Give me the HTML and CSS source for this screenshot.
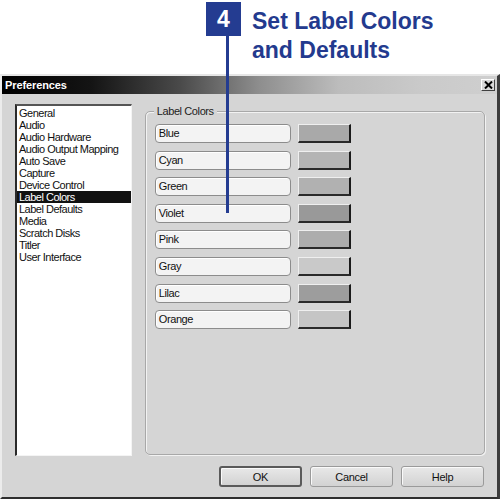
FILE: index.html
```html
<!DOCTYPE html>
<html>
<head>
<meta charset="utf-8">
<link rel="stylesheet" href="styles.css">
</head>
<body>
<div class="page">
  <div class="header">
    <div class="step">4</div>
    <div class="heading">Set Label Colors<br>and Defaults</div>
  </div>
  <div class="callout-line"></div>
  <div class="dialog">
    <div class="titlebar">
      <span class="title">Preferences</span>
      <span class="close">
        <svg width="9" height="8" viewBox="0 0 9 8"><path d="M1 0.5 L8 7.5 M8 0.5 L1 7.5" stroke="#000" stroke-width="2"/></svg>
      </span>
    </div>
    <div class="body">
      <div class="content">
        <ul class="list">
          <li>General</li>
          <li>Audio</li>
          <li>Audio Hardware</li>
          <li>Audio Output Mapping</li>
          <li>Auto Save</li>
          <li>Capture</li>
          <li>Device Control</li>
          <li class="selected">Label Colors</li>
          <li>Label Defaults</li>
          <li>Media</li>
          <li>Scratch Disks</li>
          <li>Titler</li>
          <li>User Interface</li>
        </ul>
        <div class="group">
          <span class="legend">Label Colors</span>
          <div class="rows">
            <div class="row"><div class="field">Blue</div><div class="swatch" style="background:#a9a9a9"></div></div>
            <div class="row"><div class="field">Cyan</div><div class="swatch" style="background:#b4b4b4"></div></div>
            <div class="row"><div class="field">Green</div><div class="swatch" style="background:#b1b1b1"></div></div>
            <div class="row"><div class="field">Violet</div><div class="swatch" style="background:#999999"></div></div>
            <div class="row"><div class="field">Pink</div><div class="swatch" style="background:#adadad"></div></div>
            <div class="row"><div class="field">Gray</div><div class="swatch" style="background:#c9c9c9"></div></div>
            <div class="row"><div class="field">Lilac</div><div class="swatch" style="background:#9d9d9d"></div></div>
            <div class="row"><div class="field">Orange</div><div class="swatch" style="background:#c5c5c5"></div></div>
          </div>
        </div>
      </div>
      <div class="buttons">
        <button class="btn default">OK</button>
        <button class="btn">Cancel</button>
        <button class="btn">Help</button>
      </div>
    </div>
  </div>
</div>
</body>
</html>
```

FILE: styles.css
```css
html, body {
  margin: 0;
  padding: 0;
  background: #ffffff;
}
.page {
  position: relative;
  width: 500px;
  height: 501px;
  overflow: hidden;
  font-family: "Liberation Sans", Arial, sans-serif;
}
.header {
  display: flex;
  align-items: flex-start;
  height: 74px;
  padding-left: 206px;
  box-sizing: border-box;
}
.step {
  margin-top: 2px;
  width: 35px;
  height: 34px;
  background: #243c91;
  color: #ffffff;
  font-weight: bold;
  font-size: 23px;
  line-height: 34px;
  text-align: center;
}
.heading {
  margin-left: 11px;
  margin-top: 7px;
  color: #233a8e;
  font-weight: bold;
  font-size: 23px;
  line-height: 29px;
}
.callout-line {
  position: absolute;
  left: 226px;
  top: 36px;
  width: 3px;
  height: 177px;
  background: #243c91;
  z-index: 5;
}
.dialog {
  width: 500px;
  height: 425px;
  box-sizing: border-box;
  background: #d5d5d5;
  border-top: 2px solid #e6e6e6;
  border-left: 2px solid #ececec;
  border-right: 3px solid #3c3c3c;
  border-bottom: 2px solid #2e2e2e;
  display: flex;
  flex-direction: column;
}
.titlebar {
  height: 18px;
  display: flex;
  align-items: center;
  justify-content: space-between;
  padding: 0 2px 0 3px;
  background: linear-gradient(to right, #000 0%, #141414 18%, #4a4a4a 36%, #8e8e8e 52%, #bcbcbc 68%, #cacaca 85%, #cfcfcf 100%);
}
.title {
  color: #ffffff;
  font-weight: bold;
  font-size: 11px;
  letter-spacing: -0.1px;
}
.close {
  width: 14px;
  height: 12px;
  box-sizing: border-box;
  background: #d8d8d8;
  border-top: 1px solid #ffffff;
  border-left: 1px solid #ffffff;
  border-right: 1px solid #404040;
  border-bottom: 1px solid #404040;
  display: flex;
  align-items: center;
  justify-content: center;
}
.body {
  flex: 1;
  display: flex;
  flex-direction: column;
  padding: 10px 12px 0 13px;
}
.content {
  display: flex;
  align-items: flex-start;
}
.list {
  list-style: none;
  margin: 0;
  padding: 1px 0 0 0;
  width: 117px;
  height: 352px;
  box-sizing: border-box;
  background: #ffffff;
  border-top: 2px solid #555;
  border-left: 2px solid #2a2a2a;
  border-right: 1px solid #f4f4f4;
  border-bottom: 1px solid #f4f4f4;
  font-size: 11px;
  letter-spacing: -0.5px;
  color: #111;
}
.list li {
  height: 12px;
  line-height: 12px;
  padding-left: 2px;
  white-space: nowrap;
}
.list li.selected {
  background: #111111;
  color: #ffffff;
}
.group {
  position: relative;
  margin-left: 13px;
  margin-top: 7px;
  width: 341px;
  height: 344px;
  box-sizing: border-box;
  border: 1px solid #a8a8a8;
  border-radius: 5px;
  box-shadow: inset 1px 1px 0 #f2f2f2, 1px 1px 0 #f2f2f2;
  padding: 12px 0 0 9px;
}
.legend {
  position: absolute;
  left: 8px;
  top: -7px;
  padding: 0 3px;
  background: #d5d5d5;
  font-size: 11px;
  letter-spacing: -0.4px;
  color: #222;
  line-height: 12px;
}
.rows {
  display: flex;
  flex-direction: column;
  gap: 7.6px;
}
.row {
  display: flex;
  align-items: center;
  gap: 7px;
  height: 19px;
}
.field {
  width: 136px;
  height: 19px;
  box-sizing: border-box;
  border: 1px solid #8c8c8c;
  border-radius: 4px;
  background: #f3f3f3;
  box-shadow: inset 1px 1px 0 #ffffff;
  font-size: 11px;
  letter-spacing: -0.4px;
  line-height: 17px;
  padding-left: 3px;
  color: #111;
}
.swatch {
  width: 53px;
  height: 19px;
  box-sizing: border-box;
  border-top: 1px solid #efefef;
  border-left: 1px solid #efefef;
  border-right: 2px solid #1a1a1a;
  border-bottom: 2px solid #2a2a2a;
}
.buttons {
  display: flex;
  justify-content: flex-end;
  gap: 8px;
  margin-top: 10px;
  padding-right: 1px;
}
.btn {
  width: 83px;
  height: 21px;
  box-sizing: border-box;
  border: 1px solid #9a9a9a;
  border-radius: 3px;
  background: linear-gradient(#e8e8e8, #d2d2d2);
  box-shadow: inset 1px 1px 0 #fafafa;
  font-family: "Liberation Sans", Arial, sans-serif;
  font-size: 11px;
  letter-spacing: -0.3px;
  color: #111;
  padding: 0;
}
.btn.default {
  border: 2px solid #5a5a5a;
}
```
